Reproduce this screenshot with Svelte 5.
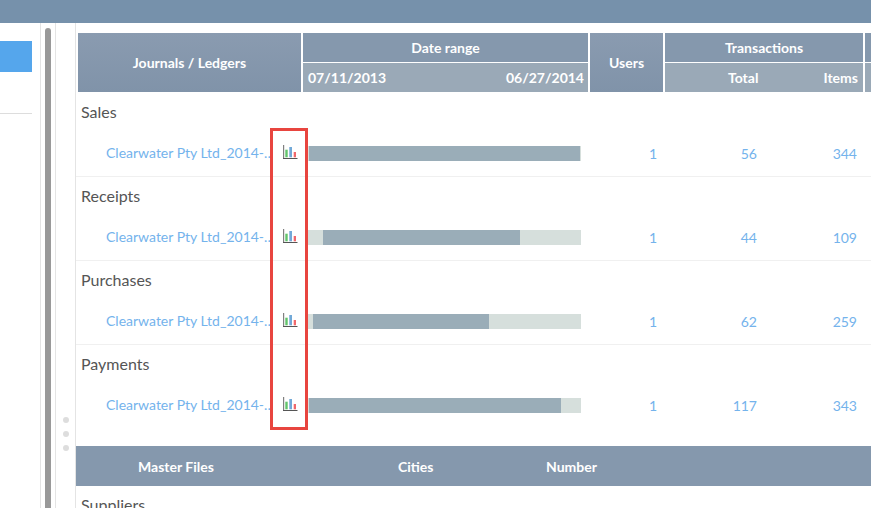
<script>
    const journals = [
        { label: "Sales", start: 1, end: 272, users: 1, total: 56, items: 344 },
        { label: "Receipts", start: 15, end: 212, users: 1, total: 44, items: 109 },
        { label: "Purchases", start: 5, end: 181, users: 1, total: 62, items: 259 },
        { label: "Payments", start: 1, end: 253, users: 1, total: 117, items: 343 },
    ];
</script>

<div class="page">
    <div class="topbar"></div>
    <div class="content">
        <aside class="side">
            <div class="side-inner">
                <div class="selected"></div>
                <hr />
            </div>
        </aside>
        <div class="gutter"><div class="thumb"></div></div>
        <div class="splitter">
            <span></span>
            <span></span>
            <span></span>
        </div>
        <main class="main">
            <div class="jhead">
                <div class="th tall">Journals / Ledgers</div>
                <div class="group">
                    <div class="th">Date range</div>
                    <div class="sub dates"><span>07/11/2013</span><span>06/27/2014</span></div>
                </div>
                <div class="th tall">Users</div>
                <div class="group">
                    <div class="th">Transactions</div>
                    <div class="sub totals"><span>Total</span><span>Items</span></div>
                </div>
                <div class="group">
                    <div class="th"></div>
                    <div class="sub"></div>
                </div>
            </div>

            {#each journals as j}
                <section class="journal">
                    <div class="label">{j.label}</div>
                    <div class="detail">
                        <span class="name">Clearwater Pty Ltd_2014-2015 Sales Journal</span>
                        <svg class="icon" width="15" height="14" viewBox="0 0 15 14">
                            <path d="M0.6 0V13" fill="none" stroke="#808080" stroke-width="1.2" />
                            <path d="M0 13.5H14.5" fill="none" stroke="#555" />
                            <rect x="2.3" y="4.7" width="2.4" height="7.6" fill="#62c46c" />
                            <rect x="6.3" y="2" width="2.7" height="10.3" fill="#72a9d8" />
                            <rect x="10.7" y="7" width="2.3" height="5.3" fill="#f0686c" />
                        </svg>
                        <div class="bar">
                            <div class="fill" style="margin-left: {j.start}px; width: {j.end - j.start}px"></div>
                        </div>
                        <span class="num">{j.users}</span>
                        <span class="num">{j.total}</span>
                        <span class="num">{j.items}</span>
                    </div>
                </section>
            {/each}

            <div class="mhead">
                <span>Master Files</span>
                <span>Cities</span>
                <span>Number</span>
            </div>
            <section class="journal">
                <div class="label">Suppliers</div>
            </section>

            <div class="highlight"></div>
        </main>
    </div>
</div>

<style>
    :global(body) {
        margin: 0;
        background: #fff;
    }

    .page {
        width: 871px;
        height: 508px;
        overflow: hidden;
        font-family: Lato, "Liberation Sans", sans-serif;
        font-size: 14px;
    }

    .topbar {
        height: 23px;
        background: #7691ab;
    }

    .content {
        display: flex;
        height: 485px;
        overflow: hidden;
    }

    .side {
        width: 40px;
        border-right: 1px solid #e4e4e4;
    }

    .side-inner {
        width: 32px;
        padding-top: 18px;
    }

    .selected {
        height: 31px;
        background: #55a6ec;
    }

    hr {
        margin: 41px 0 0;
        border: 0;
        border-top: 1px solid #ddd;
    }

    .gutter {
        width: 15px;
        padding: 5px 0 0 4px;
        box-sizing: border-box;
        border-right: 1px solid #e4e4e4;
    }

    .thumb {
        width: 6px;
        height: 100%;
        background: #999;
        border-radius: 3px 3px 0 0;
    }

    .splitter {
        width: 19px;
        display: flex;
        flex-direction: column;
        align-items: center;
        gap: 8px;
        padding-top: 394px;
        box-sizing: border-box;
    }

    .splitter span {
        width: 6px;
        height: 6px;
        border-radius: 50%;
        background: #ddd;
    }

    .main {
        position: relative;
        flex: 1;
        min-width: 0;
        border-left: 1px solid #e4e4e4;
    }

    .jhead {
        display: grid;
        grid-template-columns: 223px 285px 73px 198px 40px;
        gap: 2px;
        height: 59px;
        margin: 10px 0 1px 2px;
        color: #fff;
        font-weight: 700;
    }

    .th {
        display: flex;
        align-items: center;
        justify-content: center;
        background: #8598ad;
    }

    .tall {
        background: linear-gradient(#8a9bb0, #8093a9);
    }

    .group {
        display: grid;
        grid-template-rows: 29px 29px;
        gap: 1px;
    }

    .sub {
        display: flex;
        align-items: center;
        justify-content: space-between;
        background: #9aa9b7;
    }

    .dates {
        padding: 0 4px 0 5px;
    }

    .totals {
        justify-content: flex-start;
        padding-left: 63px;
        gap: 65px;
    }

    .journal {
        height: 83px;
        border-bottom: 1px solid #f0f0f0;
    }

    .journal:nth-last-of-type(2) {
        border-bottom: 0;
    }

    .label {
        height: 38px;
        line-height: 38px;
        padding-left: 5px;
        font-size: 16px;
        color: #555;
    }

    .detail {
        display: grid;
        grid-template-columns: 172px 30px 273px 76px 100px 100px;
        align-items: center;
        height: 45px;
        padding-left: 30px;
        color: #74b3ec;
    }

    .name {
        overflow: hidden;
        white-space: nowrap;
        text-overflow: ellipsis;
        margin-top: -2px;
        clip-path: inset(0 5px 0 0);
    }

    .icon {
        display: block;
        align-self: start;
        margin: 14px 0 0 5px;
    }

    .bar {
        height: 15px;
        background: #d6dfdc;
    }

    .fill {
        height: 100%;
        background: #9aadb8;
    }

    .num {
        text-align: right;
    }

    .mhead {
        display: grid;
        grid-template-columns: 260px 148px 1fr;
        align-items: center;
        height: 40px;
        margin-top: 18px;
        padding-left: 62px;
        background: #8598ad;
        color: #fff;
        font-weight: 700;
    }

    /* annotation drawn over the sparkline column */
    .highlight {
        position: absolute;
        left: 194px;
        top: 105px;
        width: 32px;
        height: 296px;
        border: 3px solid #e8453f;
    }
</style>
